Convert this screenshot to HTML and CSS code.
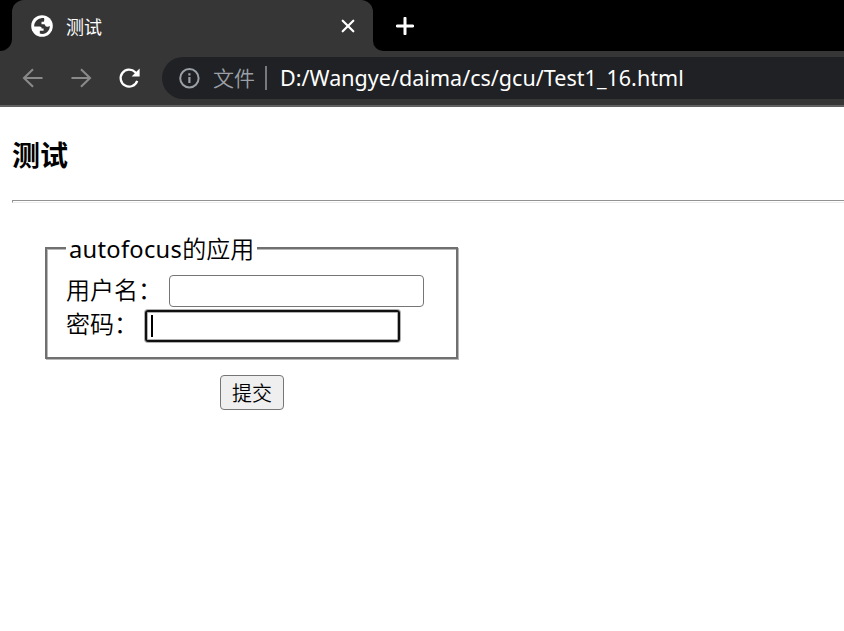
FILE: index.html
```html
<!DOCTYPE html>
<html lang="zh-CN">
<head>
<meta charset="utf-8">
<title>测试</title>
<link rel="stylesheet" href="styles.css">
</head>
<body>
<header class="browser">
  <div class="tabstrip">
    <div class="strip-left"></div>
    <div class="tab-slot">
      <div class="tab">
        <svg class="globe" viewBox="0 0 22 22" width="22" height="22">
          <circle cx="11" cy="11" r="10.8" fill="#fff"/>
          <path d="M13 3C9 2.6 5 4.8 3.6 8.6c-.3.8-.5 1.8-.4 2.9h5.3c1.6 0 2.3.9 2.1 2.1h2v2.2H8.8v2.8c3.6 1.1 7.2-.5 9-3.6.8-1.3 1-2.8 1-4-1.2.9-2.3 1-3.5.5-1-.4-1.3-1.3-1.7-2.3h-3.1V6.7h2.3c.6-1.2.6-2.4.2-3.7z" fill="#363636"/>
        </svg>
        <span class="tab-title">测试</span>
        <svg class="close" viewBox="0 0 14 14" width="14" height="14"><path d="M1.7 1.7l10.6 10.6M12.3 1.7L1.7 12.3" stroke="#fff" stroke-width="2.2" stroke-linecap="round"/></svg>
      </div>
    </div>
    <div class="strip-right">
      <svg viewBox="0 0 18 18" width="18" height="18"><path d="M9 1.2v15.6M1.2 9h15.6" stroke="#fff" stroke-width="3" stroke-linecap="round"/></svg>
    </div>
  </div>
  <div class="toolbar">
    <svg class="nav" viewBox="0 0 22 20" width="22" height="20"><path d="M20.5 10H2M11 1.2L2 10l9 8.8" fill="none" stroke="#8a8a8a" stroke-width="2.1"/></svg>
    <svg class="nav" viewBox="0 0 22 20" width="22" height="20"><path d="M1.5 10H20M11 1.2l9 8.8-9 8.8" fill="none" stroke="#8a8a8a" stroke-width="2.1"/></svg>
    <svg class="nav" viewBox="0 0 22 22" width="22" height="22"><path d="M19.2 13.8A8.5 8.5 0 1 1 17.3 5.2l1 1.2" fill="none" stroke="#fff" stroke-width="2.3"/><path d="M21.6 1.6v8h-8z" fill="#fff"/></svg>
    <div class="omnibox">
      <svg viewBox="0 0 22 22" width="22" height="22"><circle cx="11.4" cy="11.2" r="9.2" fill="none" stroke="#9aa0a6" stroke-width="2"/><path d="M11.4 6.2v2.2M11.4 10v6" stroke="#9aa0a6" stroke-width="2.2"/></svg>
      <span class="scheme">文件</span>
      <span class="divider"></span>
      <span class="url">D:/Wangye/daima/cs/gcu/Test1_16.html</span>
    </div>
  </div>
</header>
<main class="page">
  <h3>测试</h3>
  <div class="rule"></div>
  <form class="form">
    <fieldset>
      <legend><span class="latin">autofocus</span>的应用</legend>
      <div class="row name"><label for="user">用户名：</label><input id="user" type="text"></div>
      <div class="row pass"><label for="pwd">密码：</label><div class="focused" id="pwd"><span class="caret"></span></div></div>
    </fieldset>
    <button type="button">提交</button>
  </form>
</main>
</body>
</html>
```

FILE: styles.css
```css
* { box-sizing: border-box; }
body {
  margin: 0;
  height: 631px;
  overflow: hidden;
  background: #fff;
  color: #000;
  font-family: "Noto Sans", "Noto Sans CJK SC", sans-serif;
}
svg { display: block; flex: none; }
.browser { height: 107px; background: #363636; border-bottom: 2px solid #616161; }
.tabstrip { display: flex; height: 51px; }
.strip-left { width: 12px; background: #000; border-bottom-right-radius: 12px; }
.tab-slot { width: 361px; background: linear-gradient(#000 20px, #363636 20px); }
.tab {
  display: flex;
  align-items: center;
  height: 51px;
  padding: 0 18px 0 19px;
  background: #363636;
  border-radius: 12px 12px 0 0;
}
.tab-title {
  flex: 1;
  margin: 0 0 0 13px;
  color: #fff;
  font: 18px/26px "Noto Sans CJK SC", sans-serif;
}
.strip-right {
  flex: 1;
  padding: 17px 0 0 23px;
  background: #000;
  border-bottom-left-radius: 10px;
}
.toolbar { display: flex; align-items: center; height: 54px; padding-left: 22px; }
.nav { margin-right: 26px; }
.omnibox {
  display: flex;
  flex: 1;
  align-items: center;
  height: 42px;
  margin-left: -4px;
  padding-left: 16px;
  background: #202124;
  border-radius: 21px 0 0 21px;
}
.scheme {
  width: 42px;
  margin: -3px 0 0 13px;
  color: #9aa0a6;
  font: 21px/30px "Noto Sans CJK SC", sans-serif;
  font-weight: 350;
  white-space: nowrap;
}
.divider { width: 2px; height: 24px; margin-left: 10px; background: #767a7e; }
.url {
  margin-left: 13px;
  color: #fff;
  font: 21.5px/30px "Noto Sans", sans-serif;
  letter-spacing: 0.03px;
  white-space: nowrap;
}
.page { padding-left: 12px; }
h3 {
  margin: 27px 0 0;
  font: 700 28px/40px "Noto Sans CJK SC", sans-serif;
}
.rule { height: 3px; margin-top: 26px; border-top: 1px solid #929292; border-bottom: 1px solid #ededed; border-left: 1px solid #929292; }
.form { width: 480px; padding-left: 33px; }
fieldset {
  width: 413px;
  height: 126px;
  margin: 30px 0 0;
  padding: 0 0 0 19px;
  border: 2px solid #707070;
  box-shadow: 1px 1px 0 #b8b8b8, inset 1px 1px 0 #b8b8b8;
}
legend {
  width: 191px;
  height: 30px;
  padding: 0 3px;
  background: #fff;
  font: 24px/30px "Noto Sans CJK SC", sans-serif;
  font-weight: 350;
  white-space: nowrap;
}
.latin { font: 400 23.7px/28px "Noto Sans", sans-serif; letter-spacing: 0.28px; }
.row { display: flex; height: 32px; font: 24px/32px "Noto Sans CJK SC", sans-serif; font-weight: 350; }
.row label { white-space: nowrap; }
.name { margin-top: 12px; }
.name label { width: 103px; margin-top: -2px; }
.pass { margin-top: 3px; }
.pass label { width: 79px; margin-top: -3px; }
input {
  width: 255px;
  height: 32px;
  border: 1px solid #767676;
  border-radius: 4px;
  outline: none;
}
.focused {
  width: 255px;
  height: 32px;
  padding: 3px 4px;
  border: 2px solid #101010;
  border-radius: 3px;
  box-shadow: 0 0 0 1px #b0b0b0, inset 0 0 0 1px #b0b0b0;
}
.caret { display: block; width: 2px; height: 22px; background: #000; }
button {
  display: block;
  width: 64px;
  height: 35px;
  margin: 16px 0 0 175px;
  padding: 0;
  border: 1px solid #767676;
  border-radius: 4px;
  background: #efefef;
  color: #000;
  font: 20px/30px "Noto Sans CJK SC", sans-serif;
  font-weight: 350;
}
```
